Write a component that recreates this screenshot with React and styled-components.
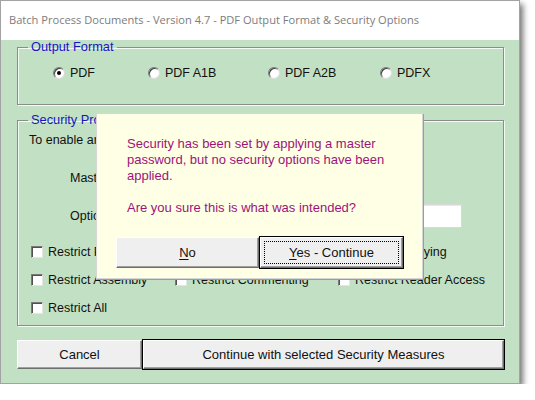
import React from 'react';
import styled, { createGlobalStyle } from 'styled-components';

const GlobalStyle = createGlobalStyle`
  html, body {
    margin: 0;
    padding: 0;
    background: #ffffff;
  }
  body {
    font-family: "Liberation Sans", Arial, sans-serif;
    font-size: 12.5px;
    color: #111;
  }
`;

// The outer dialog window with its drop shadow
const Window = styled.div`
  position: relative;
  box-sizing: border-box;
  width: 520px;
  height: 384px;
  border: 1px solid #a3a3a3;
  background: #c2e0c3;
  box-shadow: 3px 4px 6px rgba(0, 0, 0, 0.55);
  display: flex;
  flex-direction: column;
`;

const TitleBar = styled.div`
  height: 39px;
  flex: none;
  background: #ffffff;
  display: flex;
  align-items: center;
  padding: 0 0 2px 8px;
  box-sizing: border-box;
  font-family: "Open Sans", "Noto Sans", sans-serif;
  font-size: 11.1px;
  color: #7c7c7c;
`;

const Body = styled.div`
  flex: 1;
  display: flex;
  flex-direction: column;
  padding: 0 15px 0 16px;
`;

// Etched group frame (fieldset + legend)
const Frame = styled.fieldset`
  margin: ${(p) => p.$top}px 0 0 0;
  padding: ${(p) => p.$pad};
  border: 1px solid #8c8c8c;
  box-shadow: inset 1px 1px 0 #f4faf4, 1px 1px 0 #f4faf4;
  min-width: 0;
`;

const Legend = styled.legend`
  margin-left: 0;
  padding: 0 3px;
  font-size: 12.8px;
  line-height: 14px;
  color: #1515c4;
`;

const RadioRow = styled.div`
  display: grid;
  grid-template-columns: 95px 120px 112px auto;
  align-items: center;
  height: 16px;
  padding-left: 25px;
`;

const RadioItem = styled.label`
  display: flex;
  align-items: center;
  gap: 5px;
  white-space: nowrap;
`;

const RadioDot = styled.span`
  box-sizing: border-box;
  width: 12px;
  height: 12px;
  border-radius: 50%;
  background: #fff;
  border: 1px solid;
  border-color: #7a7a7a #dcdcdc #dcdcdc #7a7a7a;
  box-shadow: inset 1px 1px 0 #404040;
  display: flex;
  align-items: center;
  justify-content: center;

  &::after {
    content: '';
    width: 4px;
    height: 4px;
    border-radius: 50%;
    background: ${(p) => (p.$on ? '#000' : 'transparent')};
  }
`;

const Line = styled.div`
  height: 16px;
  line-height: 16px;
  white-space: nowrap;
  padding-left: 1px;
`;

const FieldRow = styled.div`
  display: flex;
  align-items: center;
  height: 24px;
  margin-top: ${(p) => p.$top}px;
  padding-left: 42px;
`;

const FieldLabel = styled.span`
  width: 180px;
  white-space: nowrap;
`;

const TextBox = styled.div`
  box-sizing: border-box;
  width: ${(p) => p.$w}px;
  height: 24px;
  background: #fff;
  border: 1px solid #d8d8d8;
  box-shadow: inset 1px 1px 0 #e8e8e8;
`;

const CheckGrid = styled.div`
  display: grid;
  grid-template-columns: 144px 163px auto;
  row-gap: 12px;
  margin-top: 16px;
  padding-left: 3px;
`;

const CheckItem = styled.label`
  display: flex;
  align-items: center;
  gap: 5px;
  height: 16px;
  white-space: nowrap;
`;

const CheckBox = styled.span`
  box-sizing: border-box;
  width: 12px;
  height: 12px;
  background: #fff;
  border: 1px solid;
  border-color: #7a7a7a #e4e4e4 #e4e4e4 #7a7a7a;
  box-shadow: inset 1px 1px 0 #505050;
`;

const ButtonRow = styled.div`
  display: flex;
  gap: 1px;
  margin-top: 14px;
`;

// Classic raised push button; $def marks the default one (black outline)
const Button = styled.button`
  box-sizing: border-box;
  width: ${(p) => p.$w}px;
  height: ${(p) => p.$h}px;
  padding: 0;
  background: #efefef;
  font-family: "Liberation Sans", Arial, sans-serif;
  font-size: 13px;
  color: #111;
  border: 1px solid;
  border-color: #ffffff #6e6e6e #6e6e6e #ffffff;
  box-shadow: ${(p) =>
    p.$def ? '0 0 0 1px #000, inset -1px -1px 0 #a0a0a0' : 'inset -1px -1px 0 #a0a0a0'};
  display: flex;
  align-items: center;
  justify-content: center;
  position: relative;

  u {
    text-decoration: underline;
    text-underline-offset: 2px;
  }
`;

const FocusRing = styled.span`
  position: absolute;
  inset: 3px;
  border: 1px dotted #000;
  pointer-events: none;
`;

// Message box overlaying the window
const Popup = styled.div`
  position: absolute;
  left: 95px;
  top: 112px;
  width: 327px;
  height: 166px;
  box-sizing: border-box;
  background: #ffffe6;
  border: 1px solid #d6d6d6;
  box-shadow: 1px 1px 0 #9c9c9c;
  padding: 22px 0 0 19px;
  display: flex;
  flex-direction: column;
`;

const Message = styled.p`
  margin: 0 0 0 11px;
  font-size: 13px;
  line-height: 16px;
  color: #9c1478;
`;

const PopupButtons = styled.div`
  display: flex;
  gap: 1px;
  margin-top: 21px;
`;

const radios = [
  { label: 'PDF', on: true },
  { label: 'PDF A1B' },
  { label: 'PDF A2B' },
  { label: 'PDFX' },
];

const checks = [
  'Restrict Printing',
  'Restrict Modifying',
  'Restrict Copying',
  'Restrict Assembly',
  'Restrict Commenting',
  'Restrict Reader Access',
  'Restrict All',
];

export default function App() {
  return (
    <>
      <GlobalStyle />
      <Window>
        <TitleBar>
          Batch Process Documents - Version 4.7 - PDF Output Format &amp; Security Options
        </TitleBar>
        <Body>
          <Frame $top={0} $pad="11px 0 23px 10px">
            <Legend>Output Format</Legend>
            <RadioRow>
              {radios.map((r) => (
                <RadioItem key={r.label}>
                  <RadioDot $on={r.on} />
                  {r.label}
                </RadioItem>
              ))}
            </RadioRow>
          </Frame>

          <Frame $top={8} $pad="5px 0 9px 10px">
            <Legend>Security Properties</Legend>
            <Line>To enable any security options, set a master password.</Line>
            <FieldRow $top={18}>
              <FieldLabel>Master Password</FieldLabel>
              <TextBox $w={150} />
            </FieldRow>
            <FieldRow $top={14}>
              <FieldLabel>Optional User Password</FieldLabel>
              <TextBox $w={212} />
            </FieldRow>
            <CheckGrid>
              {checks.map((c) => (
                <CheckItem key={c}>
                  <CheckBox />
                  {c}
                </CheckItem>
              ))}
            </CheckGrid>
          </Frame>

          <ButtonRow>
            <Button $w={125} $h={29}>Cancel</Button>
            <Button $w={361} $h={29} $def>
              Continue with selected Security Measures
            </Button>
          </ButtonRow>
        </Body>

        <Popup>
          <Message>
            Security has been set by applying a master
            <br />
            password, but no security options have been
            <br />
            applied.
            <br />
            <br />
            Are you sure this is what was intended?
          </Message>
          <PopupButtons>
            <Button $w={143} $h={31}>
              <span>
                <u>N</u>o
              </span>
            </Button>
            <Button $w={143} $h={31} $def>
              <FocusRing />
              <span>
                <u>Y</u>es - Continue
              </span>
            </Button>
          </PopupButtons>
        </Popup>
      </Window>
    </>
  );
}
